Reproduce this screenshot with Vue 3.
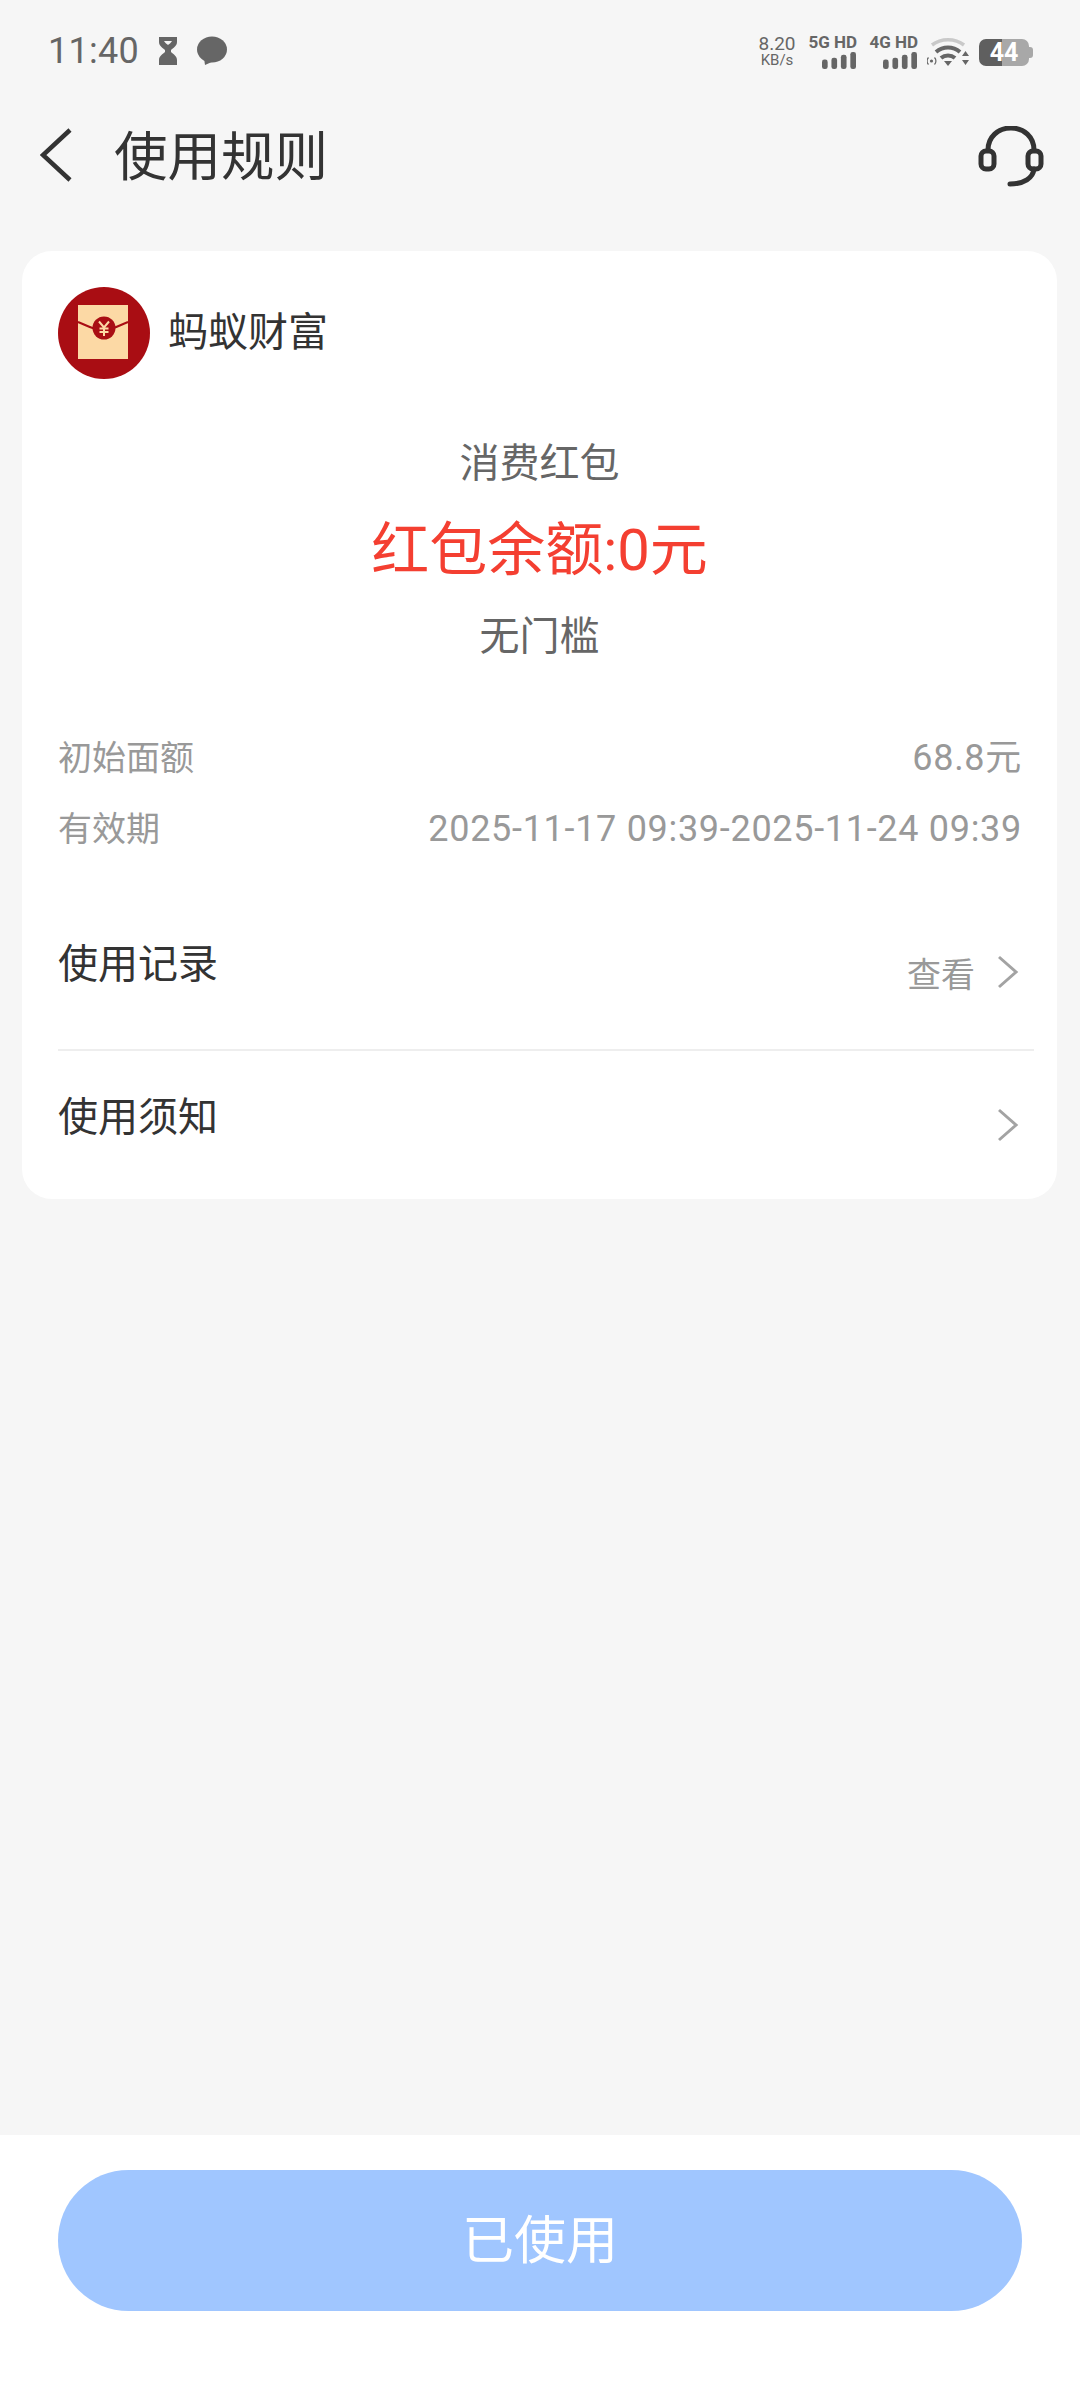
<template>
  <div class="page">
    <div class="status-bar">
      <div class="status-left">
        <span class="time">11:40</span>
        <svg class="hourglass" width="22" height="30" viewBox="0 0 20 30">
          <path d="M1 1h18v5c0 4-4 6-6 8v2c2 2 6 4 6 8v5H1v-5c0-4 4-6 6-8v-2C5 12 1 10 1 6z" fill="#666" />
          <path d="M6 5h8c-1 2-3 3-4 4-1-1-3-2-4-4z" fill="#f6f6f6" />
        </svg>
        <svg class="bubble" width="32" height="30" viewBox="0 0 32 30">
          <ellipse cx="16" cy="13.5" rx="15" ry="13" fill="#666" />
          <path d="M8 22l1 7 9-4z" fill="#666" />
        </svg>
      </div>
      <div class="status-right">
        <div class="speed">
          <span class="speed-num">8.20</span>
          <span class="speed-unit">KB/s</span>
        </div>
        <div class="net" v-for="n in networks" :key="n">
          <span class="net-name">{{ n }}</span>
          <svg width="36" height="17" viewBox="0 0 36 18">
            <rect x="0" y="8" width="6" height="10" rx="2.5" fill="#666" />
            <rect x="10" y="6" width="6" height="12" rx="2.5" fill="#666" />
            <rect x="20" y="3" width="6" height="15" rx="2.5" fill="#666" />
            <rect x="30" y="0" width="6" height="18" rx="2.5" fill="#666" />
          </svg>
        </div>
        <svg class="wifi" width="42" height="30" viewBox="0 0 42 30">
          <path d="M5 7C14 0 28 0 37 7" fill="none" stroke="#c9c9c9" stroke-width="3.5" />
          <path d="M9 14c7-6 17-6 24 0" fill="none" stroke="#666" stroke-width="4" />
          <path d="M14 20c4-3.500 10-3.500 14 0" fill="none" stroke="#666" stroke-width="4" />
          <path d="M17 23h8l-4 5z" fill="#666" />
          <circle cx="4.500" cy="23" r="1.600" fill="#666" />
          <path d="M1.500 19.500a5 5 0 0 0 0 7M7.500 19.500a5 5 0 0 1 0 7" fill="none" stroke="#666" stroke-width="1.200" />
          <path d="M35 18l3.500-5 3.500 5zM35 22h7l-3.500 5z" fill="#666" />
        </svg>
        <div class="battery">
          <span class="battery-num">44</span>
          <i class="battery-tip"></i>
        </div>
      </div>
    </div>

    <div class="nav">
      <div class="nav-left">
        <svg width="32" height="54" viewBox="0 0 32 54">
          <path d="M30 2L3 27l27 25" fill="none" stroke="#333" stroke-width="4.500" />
        </svg>
        <span class="title">使用规则</span>
      </div>
      <svg class="service" width="66" height="62" viewBox="0 0 66 62">
        <path d="M10 26V24C10 11 20 2 33 2s23 9 23 22v2" fill="none" stroke="#333" stroke-width="5" />
        <rect x="3" y="25" width="13" height="18" rx="5" fill="none" stroke="#333" stroke-width="5" />
        <rect x="50" y="25" width="13" height="18" rx="5" fill="none" stroke="#333" stroke-width="5" />
        <path d="M56 43c-1 9-10 15-24 15" fill="none" stroke="#333" stroke-width="5" stroke-linecap="round" />
      </svg>
    </div>

    <div class="card">
      <div class="brand">
        <svg width="92" height="92" viewBox="0 0 92 92">
          <circle cx="46" cy="46" r="46" fill="#a90d13" />
          <rect x="20" y="18" width="50" height="54" fill="#fcd9a5" />
          <path d="M20 35c8 3 14 7 25 9 11-2 17-6 25-9" fill="none" stroke="#a90d13" stroke-width="2" />
          <circle cx="46" cy="41" r="11.500" fill="#a90d13" />
          <path d="M41 34.500l5 6 5-6M46 40.500V49M41.500 41.500h9M41.500 45h9" fill="none" stroke="#fcd9a5" stroke-width="2" />
        </svg>
        <span class="brand-name">蚂蚁财富</span>
      </div>

      <div class="summary">
        <div class="summary-type">消费红包</div>
        <div class="summary-amount">红包余额:0元</div>
        <div class="summary-limit">无门槛</div>
      </div>

      <div class="facts">
        <div class="fact" v-for="f in facts" :key="f.label">
          <span>{{ f.label }}</span>
          <span class="fact-value">{{ f.value }}</span>
        </div>
      </div>

      <div class="link-row record">
        <span class="link-label">使用记录</span>
        <div class="link-side">
          <span class="link-hint">查看</span>
          <svg width="22" height="34" viewBox="0 0 22 34">
            <path d="M2 2l17 15L2 32" fill="none" stroke="#a3a3a3" stroke-width="3" />
          </svg>
        </div>
      </div>
      <div class="link-row notice">
        <span class="link-label">使用须知</span>
        <div class="link-side">
          <svg width="22" height="34" viewBox="0 0 22 34">
            <path d="M2 2l17 15L2 32" fill="none" stroke="#a3a3a3" stroke-width="3" />
          </svg>
        </div>
      </div>
    </div>

    <div class="footer">
      <button class="used-btn">已使用</button>
    </div>
  </div>
</template>

<script setup>
const networks = ['5G HD', '4G HD']

const facts = [
  { label: '初始面额', value: '68.8元' },
  { label: '有效期', value: '2025-11-17 09:39-2025-11-24 09:39' }
]
</script>

<style>
html,
body {
  margin: 0;
  background: #f6f6f6;
}
</style>

<style scoped>
.page {
  width: 1080px;
  height: 2400px;
  display: flex;
  flex-direction: column;
  background: #f6f6f6;
  font-family: Roboto, "Noto Sans CJK SC", sans-serif;
  color: #333;
}

.status-bar {
  height: 100px;
  box-sizing: border-box;
  padding: 0 46px 0 48px;
  display: flex;
  justify-content: space-between;
  align-items: flex-start;
  color: #666;
}

.status-left {
  display: flex;
  align-items: center;
  height: 100px;
  padding-top: 1px;
}

.time {
  font-size: 36px;
  letter-spacing: 0.3px;
}

.hourglass {
  margin-left: 18px;
}

.bubble {
  margin-left: 17px;
}

.status-right {
  display: flex;
  align-items: flex-start;
  padding-top: 34px;
}

.speed {
  width: 38px;
  margin-left: -2px;
  display: flex;
  flex-direction: column;
  align-items: center;
}

.speed-num {
  font-size: 19px;
  line-height: 19px;
}

.speed-unit {
  font-size: 15px;
  line-height: 15px;
}

.net {
  width: 50px;
  margin-left: 11px;
  display: flex;
  flex-direction: column;
  align-items: flex-end;
  gap: 1px;
}

.net-name {
  font-size: 17px;
  line-height: 17px;
  font-weight: 700;
  white-space: nowrap;
}

.net:first-of-type {
  margin-left: 16px;
}

.wifi {
  margin-left: 9px;
  margin-top: 4px;
}

.battery {
  position: relative;
  width: 50px;
  height: 27px;
  margin: 5px 5px 0 10px;
  border-radius: 7px;
  background: linear-gradient(90deg, #5f5f5f 0 46%, #a8a8a8 46% 100%);
  display: flex;
  align-items: center;
  justify-content: center;
}

.battery-num {
  color: #fff;
  font-size: 25px;
  font-weight: 700;
  line-height: 27px;
}

.battery-tip {
  position: absolute;
  right: -4px;
  top: 8px;
  width: 4px;
  height: 11px;
  border-radius: 0 3px 3px 0;
  background: #a8a8a8;
}

.nav {
  height: 110px;
  box-sizing: border-box;
  padding: 0 36px 0 40px;
  display: flex;
  align-items: center;
  justify-content: space-between;
}

.nav-left {
  display: flex;
  align-items: center;
}

.title {
  margin-left: 42px;
  padding-top: 5px;
  font-size: 53.5px;
  line-height: 60px;
  color: #333;
}

.service {
  margin-top: 4px;
}

.card {
  margin: 41px 23px 0 22px;
  height: 948px;
  box-sizing: border-box;
  background: #fff;
  border-radius: 30px;
  padding: 36px 0 0 36px;
}

.brand {
  display: flex;
  align-items: center;
  gap: 18px;
}

.brand-name {
  padding-bottom: 8px;
  font-size: 40px;
  color: #333;
}

.summary {
  margin-top: 55px;
  padding-right: 36px;
  text-align: center;
  color: #666;
  font-size: 40px;
}

.summary-type {
  line-height: 60px;
}

.summary-amount {
  margin-top: 26px;
  font-size: 58px;
  line-height: 60px;
  color: #f43f31;
}

.summary-limit {
  margin-top: 27px;
  line-height: 60px;
}

.facts {
  margin-top: 71px;
  padding-right: 35px;
  display: flex;
  flex-direction: column;
  gap: 31px;
}

.fact {
  height: 40px;
  line-height: 40px;
  display: flex;
  justify-content: space-between;
  align-items: baseline;
  color: #999;
  font-size: 34px;
}

.fact-value {
  font-size: 36px;
  letter-spacing: 0.7px;
}

.link-row {
  display: flex;
  justify-content: space-between;
  margin-right: 23px;
}

.record {
  height: 202px;
  padding-top: 91px;
  box-sizing: border-box;
  border-bottom: 2px solid #eee;
}

.notice {
  padding-top: 42px;
}

.link-label {
  font-size: 40px;
  line-height: 50px;
  color: #333;
}

.link-side {
  display: flex;
  align-items: center;
  gap: 22px;
  padding: 7px 15px 0 0;
  height: 50px;
}

.link-hint {
  font-size: 34px;
  color: #999;
}

.footer {
  margin-top: auto;
  height: 265px;
  box-sizing: border-box;
  background: #fff;
  padding: 35px 58px 0;
}

.used-btn {
  display: block;
  width: 100%;
  height: 141px;
  padding: 0 0 8px;
  border: none;
  border-radius: 71px;
  background: #a0c6ff;
  color: #fff;
  font-family: inherit;
  font-size: 52px;
}
</style>
